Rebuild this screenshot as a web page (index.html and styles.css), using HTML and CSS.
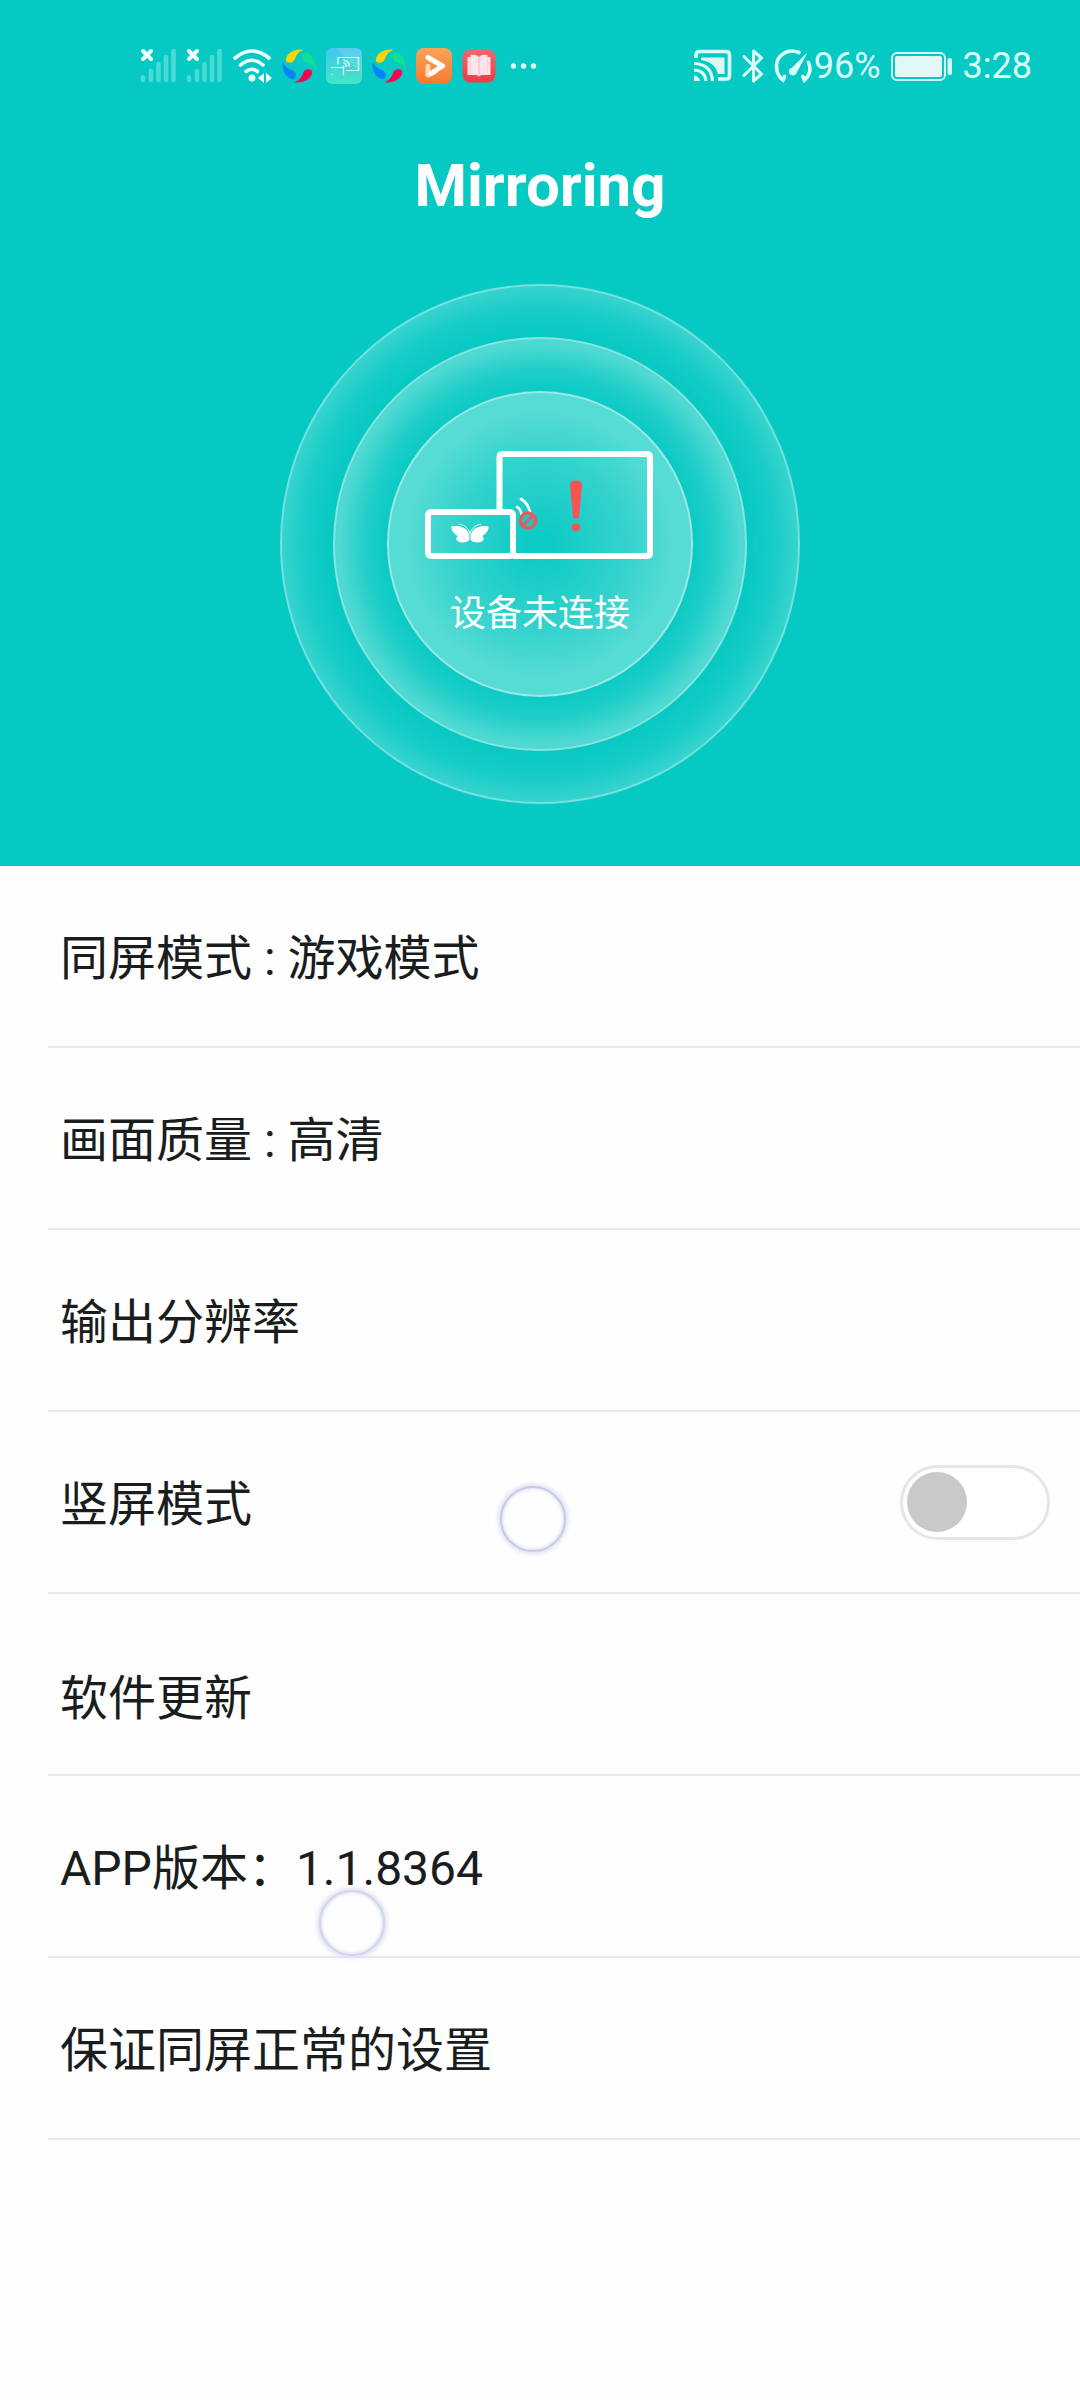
FILE: index.html
```html
<!DOCTYPE html>
<html lang="zh-CN">
<head>
<meta charset="utf-8">
<meta name="viewport" content="width=device-width, initial-scale=1">
<title>Mirroring</title>
<link rel="stylesheet" href="styles.css">
</head>
<body>
<svg class="defs" width="0" height="0" aria-hidden="true">
  <defs>
    <linearGradient id="sky" x1="0" y1="0" x2="0" y2="1"><stop offset="0" stop-color="#45c4ee"/><stop offset="1" stop-color="#3fe8c4"/></linearGradient>
    <linearGradient id="orange" x1="0" y1="0" x2="0" y2="1"><stop offset="0" stop-color="#fba35c"/><stop offset="1" stop-color="#f8792b"/></linearGradient>
    <linearGradient id="red" x1="0" y1="0" x2="0" y2="1"><stop offset="0" stop-color="#fb6468"/><stop offset="1" stop-color="#ee3c46"/></linearGradient>
    <symbol id="signal" viewBox="0 0 36 36">
      <g stroke="#4adbd5" stroke-width="4.600" stroke-linecap="round"><path d="M3 29.500V32M11 23V32M18.500 16V32M26 9V32M33.500 3V32"/></g>
      <path d="M3 3l8 8M11 3l-8 8" stroke="#effffe" stroke-width="4" stroke-linecap="round"/>
    </symbol>
    <symbol id="swirl" viewBox="0 0 34 34">
      <path d="M21.500 .8C14-1 4 4 3.800 11c0 3 5 4 8 1C14 9 14 3.500 21.500 .8z" fill="#ffd404"/>
      <path d="M21.500 .8C14-1 4 4 3.800 11c0 3 5 4 8 1C14 9 14 3.500 21.500 .8z" fill="#10e08f" transform="rotate(90 17 17)"/>
      <path d="M21.500 .8C14-1 4 4 3.800 11c0 3 5 4 8 1C14 9 14 3.500 21.500 .8z" fill="#f8034d" transform="rotate(180 17 17)"/>
      <path d="M21.500 .8C14-1 4 4 3.800 11c0 3 5 4 8 1C14 9 14 3.500 21.500 .8z" fill="#0783fd" transform="rotate(270 17 17)"/>
    </symbol>
  </defs>
</svg>

<header class="hero">
  <div class="status">
    <div class="status-left">
      <svg width="36" height="36"><use href="#signal"/></svg>
      <svg width="36" height="36"><use href="#signal"/></svg>
      <svg width="40" height="36" viewBox="0 0 40 36" fill="none">
        <path d="M3 10Q20-4 37 10M8.500 17Q20 7.500 31 17M14 23.500Q20 19 25.500 23.500" stroke="#effffe" stroke-width="3.600" stroke-linecap="round"/>
        <circle cx="20" cy="30" r="3.500" fill="#effffe"/>
        <path d="M32 25v10l-6-5zM34 25v10l6-5z" fill="#effffe"/>
      </svg>
      <svg width="34" height="34"><use href="#swirl"/></svg>
      <svg width="36" height="36" viewBox="0 0 36 36" fill="none">
        <rect width="36" height="36" rx="6" fill="url(#sky)"/>
        <path d="M10 0h20q6 0 6 6v20z" fill="#fff" opacity=".12"/>
        <path d="M12 16.500V9.500H32.500V22.500H20M5 19.500H17.500V27M5.500 26.500h1" stroke="#eaffff" stroke-width="1.200"/>
        <path d="M17.500 12q6 1 6 7M17.500 15q3 .5 3 4M17 18l1.500 1.500" stroke="#eaffff" stroke-width="1.400"/>
      </svg>
      <svg width="34" height="34"><use href="#swirl"/></svg>
      <svg width="36" height="36" viewBox="0 0 36 36" fill="none">
        <rect width="36" height="36" rx="8" fill="url(#orange)"/>
        <path d="M12 18.500V27L19 23.500" stroke="#ffd9bb" stroke-width="5" stroke-linecap="round" stroke-linejoin="round"/>
        <path d="M12 9.500L26.500 18L15 25.500" stroke="#fff" stroke-width="5" stroke-linecap="round" stroke-linejoin="round"/>
      </svg>
      <svg width="34" height="34" viewBox="0 0 34 34">
        <rect x=".5" y=".5" width="33" height="33" rx="8" fill="url(#red)"/>
        <path d="M5.500 8h3v-2q6-1 8.500 2q2.500-3 8.500-2v2h3v18h-9l-2.500 1.500L14.500 26h-9z" fill="#ffe3e6"/>
        <path d="M8.500 8v16M25.500 8v16" stroke="#ffd0d6"/>
        <path d="M17 8v18" stroke="#f9b9c0" stroke-width="1.200"/>
      </svg>
      <svg width="34" height="34" viewBox="0 0 34 34" fill="#e2fffd"><circle cx="7.500" cy="17" r="2.700"/><circle cx="17.500" cy="17" r="2.700"/><circle cx="27.500" cy="17" r="2.700"/></svg>
    </div>
    <div class="status-right">
      <svg width="38" height="36" viewBox="0 0 38 36" fill="none">
        <path d="M2 10V7q0-3.500 3.500-3.500H32q3.500 0 3.500 3.500V27.500q0 3.500-3.500 3.500H24" stroke="#dcfffc" stroke-width="3.600"/>
        <path d="M7 9.500H30.500V26H24Q21 14 7 12z" fill="#dcf8f5"/>
        <path d="M0 15.500Q17.500 16 18.500 33M0 22Q11 22.500 12 33" stroke="#dcfffc" stroke-width="3"/>
        <path d="M0 27.500q5 .5 6 5.500H0z" fill="#dcfffc"/>
      </svg>
      <svg width="22" height="36" viewBox="0 0 22 36" fill="none" stroke="#dcfffc" stroke-width="3" stroke-linejoin="round" stroke-linecap="round"><path d="M2 8.500L19.500 26L11.500 33V3L19.500 10L2 27.500"/></svg>
      <span class="charge">
        <svg width="40" height="36" viewBox="0 0 40 36" fill="none" stroke="#dcfffc" stroke-linecap="round">
          <path d="M25 4.500C12-.5 2 9 2.500 19C2.700 25 5 29 9 32l1.500-3.500M34.500 14.500C37.500 21 35.500 28 30.500 32L29 28.500" stroke-width="3.600"/>
          <path d="M32 6.500L22.500 24a3.600 3.600 0 1 1-4.500-4z" fill="#dcfffc" stroke-width="1"/>
        </svg>
        <span>96%</span>
      </span>
      <svg width="62" height="36" viewBox="0 0 62 36" fill="none">
        <rect x="1" y="5" width="53" height="27" rx="5" stroke="#cffaf6" stroke-width="2"/>
        <rect x="4" y="8" width="47" height="21" rx="2" fill="#e2f8f6"/>
        <rect x="56.500" y="10" width="4.500" height="17" rx="2" fill="#cffaf6"/>
      </svg>
      <time>3:28</time>
    </div>
  </div>

  <h1 class="title">Mirroring</h1>

  <div class="ring ring-outer">
    <div class="ring ring-middle">
      <button class="ring ring-inner" type="button">
        <svg width="230" height="108" viewBox="0 0 230 108" fill="none">
          <path d="M74.500 60V6q0-3 3-3H222q3 0 3 3V102q0 3-3 3H88" stroke="#fff" stroke-width="6"/>
          <rect x="3" y="61" width="85" height="44" rx="3" stroke="#fff" stroke-width="6"/>
          <g stroke="#fff" stroke-width="2.600" stroke-linecap="round"><path d="M96 48Q103 52 105 61M92 56q4 2 4.500 8"/></g>
          <circle cx="103" cy="69.500" r="7.600" stroke="#e9595b" stroke-width="3.400"/>
          <path d="M98 74.500l10-10" stroke="#e9595b" stroke-width="3"/>
          <path d="M145 34q0-4.500 6-4.500t6 4.500L154 65q-.5 3-3 3t-3-3z" fill="#f75553"/>
          <ellipse cx="151" cy="76.300" rx="4.400" ry="3.800" fill="#f75553"/>
          <path d="M26.500 75.500C33 74 42 76 44 83v6.500c-3 2.500-10 2.500-12 0c-1.500-2-.5-3.500 1-4.500C29 83.500 26 79 26.500 75.500zM63.500 75.500C57 74 48 76 46 83v6.500c3 2.500 10 2.500 12 0c1.500-2 .5-3.500-1-4.500C61 83.500 64 79 63.500 75.500z" fill="#fff"/>
          <path d="M45 82C43 77 39 73.500 34 73.200M45 82C47 77 51 73.500 56 73.200M45 81v8" stroke="#dffaf8"/>
        </svg>
        <span class="caption">设备未连接</span>
      </button>
    </div>
  </div>
</header>

<main>
  <ul class="settings">
    <li class="row"><button class="item" type="button">同屏模式 : 游戏模式</button></li>
    <li class="row"><button class="item" type="button">画面质量 : 高清</button></li>
    <li class="row"><button class="item" type="button">输出分辨率</button></li>
    <li class="row">
      <label class="item" for="portrait">竖屏模式</label>
      <input class="switch" id="portrait" type="checkbox" role="switch">
      <i class="touch touch-recent"></i>
    </li>
    <li class="row"><button class="item item-update" type="button">软件更新</button></li>
    <li class="row">
      <span class="item">APP版本：1.1.8364</span>
      <i class="touch touch-earlier"></i>
    </li>
    <li class="row"><button class="item" type="button">保证同屏正常的设置</button></li>
  </ul>
</main>
</body>
</html>
```
FILE: styles.css
```css
* {
  box-sizing: border-box;
}

body {
  margin: 0;
  background: #fefefe;
  color: #1a1d1d;
  font-family: Roboto, "Noto Sans CJK SC", sans-serif;
}

button {
  padding: 0;
  border: 0;
  background: none;
  color: inherit;
  font: inherit;
  text-align: left;
}

svg {
  display: block;
  flex: none;
}

.defs {
  position: absolute;
}

/* Header */

.hero {
  display: flex;
  flex-direction: column;
  align-items: center;
  padding-bottom: 62px;
  background: #07c9c3;
  color: #fff;
}

.status {
  display: flex;
  justify-content: space-between;
  align-items: center;
  width: 100%;
  height: 131px;
  padding: 0 48px 0 140px;
  color: #dcfffc;
  font-size: 36px;
  line-height: 44px;
}

.status-left,
.status-right {
  display: flex;
  align-items: center;
  gap: 10px;
}

.charge {
  display: flex;
  align-items: center;
}

.title {
  margin: 0;
  font-size: 60px;
  line-height: 110px;
  font-weight: 700;
}

.ring {
  display: flex;
  justify-content: center;
  align-items: center;
  border: 2px solid rgba(255, 255, 255, 0.3);
  border-radius: 50%;
}

.ring-outer {
  width: 520px;
  height: 520px;
  margin-top: 43px;
  background: radial-gradient(closest-side, rgba(255, 255, 255, 0) 80%, rgba(255, 255, 255, 0.07) 91%, rgba(255, 255, 255, 0.2) 100%);
}

.ring-middle {
  width: 414px;
  height: 414px;
  background: radial-gradient(closest-side, #07c9c3 72%, #20cec8 85%, #50d9d3 98%);
}

.ring-inner {
  flex-direction: column;
  gap: 31px;
  width: 306px;
  height: 306px;
  border-color: rgba(255, 255, 255, 0.4);
  background: radial-gradient(closest-side, #0ccac4 5%, #32d2cc 55%, #56dbd5 88%);
}

.caption {
  font-size: 36px;
  line-height: 48px;
}

/* Settings list */

.settings {
  margin: 0;
  padding: 0 0 0 48px;
  list-style: none;
}

.row {
  position: relative;
  display: flex;
  align-items: center;
  height: 182px;
  padding-right: 30px;
  border-bottom: 2px solid #e8e8e8;
}

.item {
  flex: 1;
  align-self: stretch;
  padding: 6px 0 0 12px;
  font-size: 48px;
  line-height: 174px;
}

.item-update {
  padding-top: 30px;
  line-height: 150px;
}

.switch {
  display: flex;
  align-items: center;
  appearance: none;
  width: 150px;
  height: 75px;
  margin: 0;
  padding: 0 4px;
  border: 3px solid #e6e6e6;
  border-radius: 38px;
  background: #fff;
}

.switch::before {
  content: "";
  width: 60px;
  height: 60px;
  border-radius: 50%;
  background: #c8caca;
}

.switch:checked {
  justify-content: flex-end;
}

/* Touch feedback dots drawn over the list */

.touch {
  position: absolute;
  width: 66px;
  height: 66px;
  border: 2px solid #c6cae4;
  border-radius: 50%;
  background: #fefefe;
  box-shadow: 0 0 4px 2px #dcdff3, inset 0 0 3px 1px #dcdff3;
  pointer-events: none;
}

.touch-recent {
  top: 74px;
  left: 452px;
}

.touch-earlier {
  top: 114px;
  left: 271px;
  border-color: #d0d4ec;
}
```
